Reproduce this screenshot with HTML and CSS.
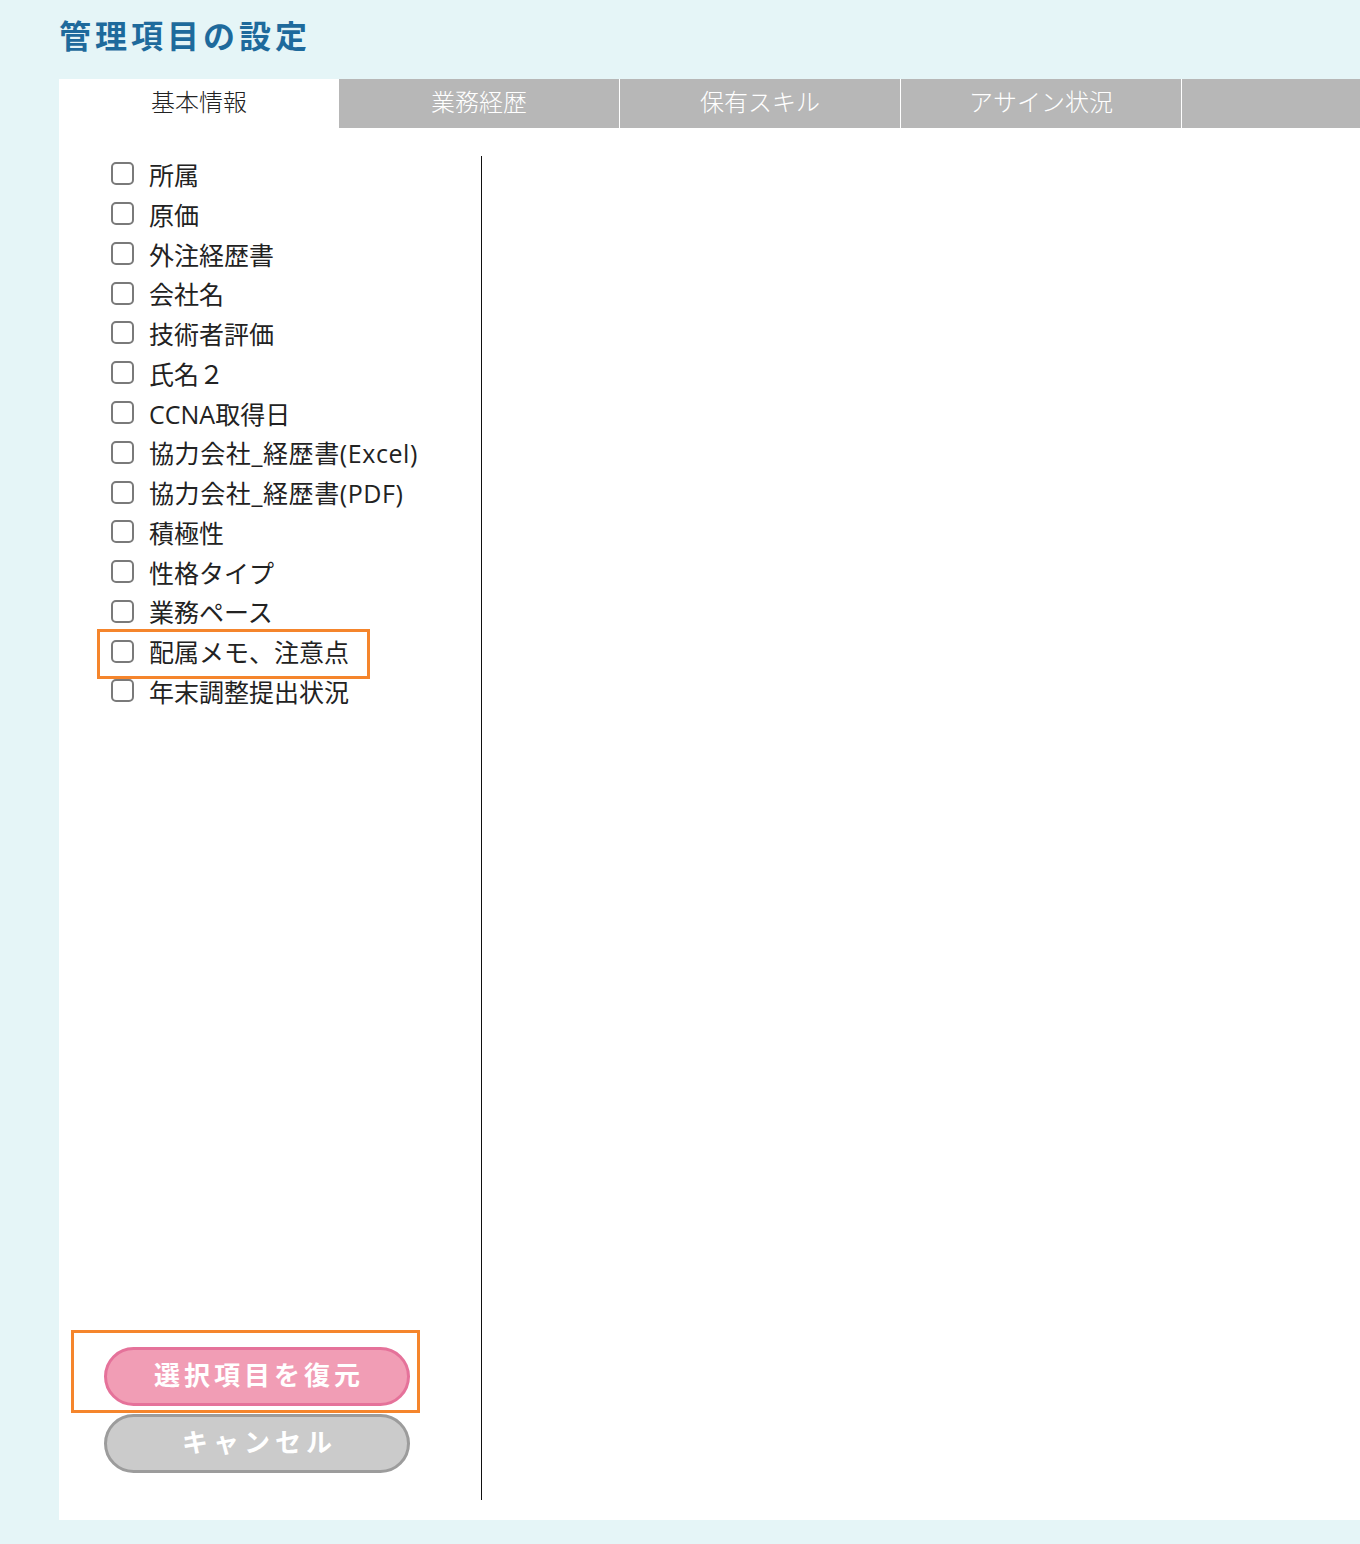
FILE: index.html
```html
<!DOCTYPE html>
<html lang="ja">
<head>
<meta charset="utf-8">
<title>管理項目の設定</title>
<link rel="stylesheet" href="styles.css">
</head>
<body>
<h1 class="title">管理項目の設定</h1>
<div class="panel">
  <div class="tabs">
    <div class="tab active">基本情報</div>
    <div class="tab">業務経歴</div>
    <div class="tab">保有スキル</div>
    <div class="tab">アサイン状況</div>
    <div class="tab last"></div>
  </div>
  <div class="body">
    <div class="col">
      <ul class="list">
        <li class="row"><input type="checkbox" class="cb"><span>所属</span></li>
        <li class="row"><input type="checkbox" class="cb"><span>原価</span></li>
        <li class="row"><input type="checkbox" class="cb"><span>外注経歴書</span></li>
        <li class="row"><input type="checkbox" class="cb"><span>会社名</span></li>
        <li class="row"><input type="checkbox" class="cb"><span>技術者評価</span></li>
        <li class="row"><input type="checkbox" class="cb"><span>氏名２</span></li>
        <li class="row"><input type="checkbox" class="cb"><span>CCNA取得日</span></li>
        <li class="row"><input type="checkbox" class="cb"><span class="wide">協力会社_経歴書(Excel)</span></li>
        <li class="row"><input type="checkbox" class="cb"><span class="wide">協力会社_経歴書(PDF)</span></li>
        <li class="row"><input type="checkbox" class="cb"><span>積極性</span></li>
        <li class="row"><input type="checkbox" class="cb"><span>性格タイプ</span></li>
        <li class="row"><input type="checkbox" class="cb"><span>業務ペース</span></li>
        <li class="row highlight"><input type="checkbox" class="cb"><span>配属メモ、注意点</span></li>
        <li class="row"><input type="checkbox" class="cb"><span>年末調整提出状況</span></li>
      </ul>
      <div class="actions">
        <div class="btn-mark">
          <button class="btn btn-restore">選択項目を復元</button>
        </div>
        <button class="btn btn-cancel">キャンセル</button>
      </div>
    </div>
    <div class="main"></div>
  </div>
</div>
</body>
</html>
```
FILE: styles.css
```css
html, body {
  margin: 0;
  padding: 0;
}
body {
  background: #e5f5f7;
  width: 1360px;
  height: 1544px;
  font-family: "Noto Sans CJK JP", "Noto Sans", sans-serif;
  color: #222;
  overflow: hidden;
}
.title {
  margin: 0;
  padding: 12px 0 0 59px;
  height: 79px;
  box-sizing: border-box;
  font-size: 32px;
  line-height: 44px;
  font-weight: 700;
  letter-spacing: 4px;
  color: #1e6a9c;
}
.panel {
  margin-left: 59px;
  background: #fff;
  height: 1441px;
  display: flex;
  flex-direction: column;
}
.tabs {
  display: flex;
  height: 49px;
  flex: none;
}
.tab {
  width: 281px;
  flex: none;
  box-sizing: border-box;
  background: #b7b7b7;
  color: #fff;
  font-size: 24px;
  line-height: 44px;
  text-align: center;
  border-right: 1px solid #fff;
  font-weight: 300;
}
.tab.active {
  width: 280px;
  background: #fff;
  color: #222;
  border-right: none;
}
.tab.last {
  flex: 1;
  border-right: none;
}
.body {
  flex: 1;
  display: flex;
  padding: 28px 0 20px;
}
.col {
  width: 423px;
  box-sizing: border-box;
  border-right: 1px solid #111;
  display: flex;
  flex-direction: column;
}
.list {
  list-style: none;
  margin: 0;
  padding: 0 0 0 52px;
}
.row {
  position: relative;
  height: 39.77px;
  display: flex;
  align-items: center;
  gap: 15px;
  font-family: "Open Sans", "Noto Sans CJK JP", sans-serif;
  font-size: 25px;
  line-height: 39.77px;
  white-space: nowrap;
}
.wide {
  letter-spacing: 0.6px;
}
.cb {
  appearance: none;
  -webkit-appearance: none;
  margin: -4px 0 0 0;
  width: 23px;
  height: 23px;
  flex: none;
  box-sizing: border-box;
  border: 2px solid #7a7a7a;
  border-radius: 5px;
  background: #fff;
}
.highlight::after {
  content: "";
  position: absolute;
  left: -14px;
  top: -4px;
  width: 273px;
  height: 50px;
  box-sizing: border-box;
  border: 3px solid #f5852c;
  pointer-events: none;
}
.actions {
  margin-top: auto;
  padding: 0 0 27px 12px;
  display: flex;
  flex-direction: column;
  align-items: flex-start;
  gap: 1px;
}
.btn-mark {
  width: 349px;
  height: 83px;
  box-sizing: border-box;
  border: 3px solid #f5852c;
  padding: 14px 0 0 30px;
}
.btn {
  width: 306px;
  height: 59px;
  box-sizing: border-box;
  border-radius: 30px;
  border: 3px solid;
  font-family: "Noto Sans CJK JP", sans-serif;
  font-size: 26px;
  font-weight: 700;
  letter-spacing: 4px;
  padding: 0 0 6px 4px;
  color: #fff;
  line-height: 46px;
  cursor: pointer;
}
.btn-restore {
  background: #f19db5;
  border-color: #e5729a;
}
.btn-cancel {
  margin-left: 33px;
  background: #cbcbcb;
  border-color: #9c9c9c;
  letter-spacing: 5px;
  padding-left: 5px;
}
.main {
  flex: 1;
}
```
